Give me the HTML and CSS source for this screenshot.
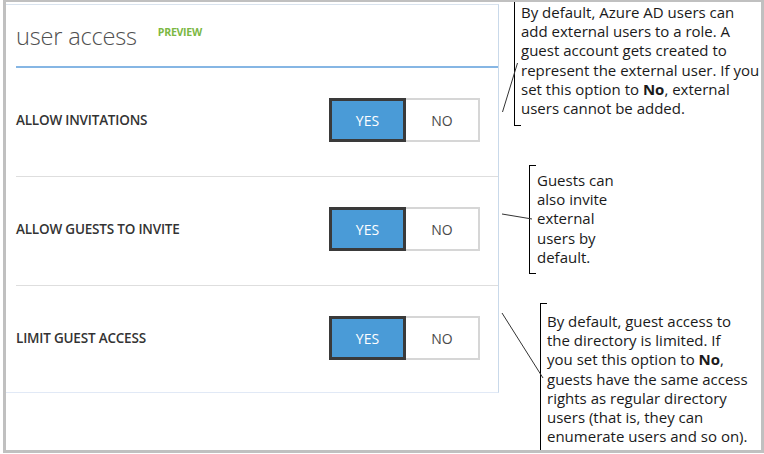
FILE: index.html
```html
<!DOCTYPE html>
<html>
<head>
<meta charset="utf-8">
<link rel="stylesheet" href="styles.css">
</head>
<body>
<div class="frame">
  <section class="panel">
    <header class="panel-head">
      <h1 class="title">user access</h1>
      <span class="badge">PREVIEW</span>
    </header>
    <div class="row">
      <span class="label">ALLOW INVITATIONS</span>
      <div class="toggle"><span class="opt yes">YES</span><span class="opt no">NO</span></div>
    </div>
    <div class="row">
      <span class="label">ALLOW GUESTS TO INVITE</span>
      <div class="toggle"><span class="opt yes">YES</span><span class="opt no">NO</span></div>
    </div>
    <div class="row last">
      <span class="label">LIMIT GUEST ACCESS</span>
      <div class="toggle"><span class="opt yes">YES</span><span class="opt no">NO</span></div>
    </div>
  </section>
  <aside class="notes">
    <div class="note n1"><p>By default, Azure AD users can<br>add external users to a role. A<br>guest account gets created to<br>represent the external user. If you<br>set this option to <b>No</b>, external<br>users cannot be added.</p></div>
    <div class="note n2"><p>Guests can<br>also invite<br>external<br>users by<br>default.</p></div>
    <div class="note n3"><p>By default, guest access to<br>the directory is limited. If<br>you set this option to <b>No</b>,<br>guests have the same access<br>rights as regular directory<br>users (that is, they can<br>enumerate users and so on).</p></div>
  </aside>
  <svg class="leaders" width="764" height="454" viewBox="0 0 764 454">
    <line x1="499.5" y1="112" x2="514.5" y2="63" />
    <line x1="499" y1="214" x2="529" y2="219" />
    <line x1="499" y1="313" x2="540" y2="378" />
  </svg>
</div>
</body>
</html>
```

FILE: styles.css
```css
html, body {
  margin: 0;
  padding: 0;
  background: #ffffff;
}

.frame {
  position: relative;
  box-sizing: border-box;
  margin-left: 3px;
  width: 761px;
  height: 453px;
  border: 3px solid #c0c0c0;
  border-top-width: 2px;
  display: grid;
  grid-template-columns: 493px 1fr;
  font-family: "Open Sans", "Noto Sans", sans-serif;
  background: #fff;
}

.panel {
  margin-top: 2px;
  align-self: start;
  border-top: 1px solid #d9e3ee;
  border-right: 1px solid #c9d9ea;
  border-bottom: 1px solid #e1e9f6;
  padding-left: 10px;
}

.panel-head {
  display: flex;
  align-items: flex-start;
  padding: 17px 0 16px 0;
  border-bottom: 2px solid #86b6e4;
}

.title {
  margin: 0;
  font-family: "Open Sans", sans-serif;
  font-weight: 300;
  font-size: 23.6px;
  line-height: 28px;
  color: #505050;
  letter-spacing: -0.2px;
}

.badge {
  margin: 4px 0 0 21px;
  font-weight: 700;
  font-size: 10.6px;
  line-height: 13px;
  color: #7cb844;
  letter-spacing: -0.3px;
}

.row {
  display: flex;
  align-items: center;
  justify-content: space-between;
  padding: 30px 18px 34px 0;
  border-bottom: 1px solid #dedede;
}

.row.last {
  border-bottom: 0;
  padding-bottom: 32px;
}

.label {
  font-weight: 600;
  font-size: 13.5px;
  color: #333;
  letter-spacing: -0.2px;
}

.toggle {
  display: flex;
}

.opt {
  box-sizing: border-box;
  height: 44px;
  display: flex;
  align-items: center;
  justify-content: center;
  font-size: 14px;
}

.yes {
  width: 77px;
  background: #4a9bd7;
  color: #fff;
  border: 3px solid #3a3a3a;
}

.no {
  width: 74px;
  background: #fff;
  color: #4a4a4a;
  border: 2px solid #d6d6d6;
  border-left: 0;
}

.notes {
  display: flex;
  flex-direction: column;
}

.note {
  position: relative;
  border-left: 1px solid #000;
  color: #1a1a1a;
  font-size: 15px;
  line-height: 19.2px;
}

.note p {
  margin: 0;
  white-space: nowrap;
}

.note b {
  font-weight: 700;
}

.note::before,
.note::after {
  content: "";
  position: absolute;
  left: 0;
  width: 6px;
  border-top: 1px solid #000;
}

.note::before { top: 0; }
.note::after { bottom: 0; }

.n1 {
  margin-left: 15px;
  height: 124px;
  padding: 1px 0 0 6px;
  box-sizing: border-box;
}

.n1::before { display: none; }

.n2 {
  margin: 39px 0 0 30px;
  height: 109px;
  box-sizing: border-box;
  padding: 6px 0 0 7px;
}

.n3 {
  margin: 29px 0 0 41px;
  flex: 1;
  padding: 9px 0 0 6px;
}

.n3::after { display: none; }

.leaders {
  position: absolute;
  left: -3px;
  top: -2px;
  pointer-events: none;
}

.leaders line {
  stroke: #333;
  stroke-width: 1;
}
```
